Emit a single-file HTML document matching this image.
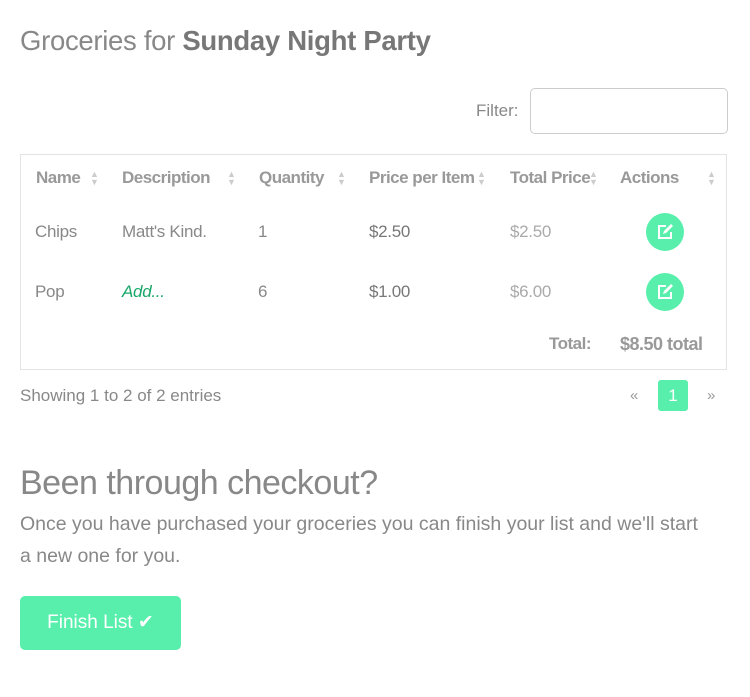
<!DOCTYPE html>
<html><head><style>
body{margin:0;width:750px;height:697px;background:#fff;font-family:"Liberation Sans",sans-serif;color:#888;position:relative;overflow:hidden}
.a{position:absolute;white-space:nowrap}
h1{position:absolute;left:20px;top:25px;margin:0;font-size:27.5px;font-weight:normal;color:#888;letter-spacing:-0.3px}
h1 b{color:#777}
.box{position:absolute;left:20px;top:154px;width:705px;height:214px;border:1px solid #e3e3e3}
.th{font-size:17px;font-weight:bold;color:#999;top:168px;letter-spacing:-0.5px}
.td{font-size:17px;color:#888;letter-spacing:-0.3px}
.s{font-size:9px;color:#ccc;line-height:8px;top:170px}
.ic{position:absolute;width:38px;height:38px;border-radius:50%;background:#58efac}
</style></head><body>
<h1>Groceries for <b>Sunday Night Party</b></h1>
<div class="a" style="left:476px;top:101px;font-size:17px">Filter:</div>
<div class="a" style="left:530px;top:88px;width:196px;height:44px;border:1px solid #ccc;border-radius:5px"></div>
<div class="box"></div>
<div class="a th" style="left:36px">Name</div><div class="a s" style="left:90px">▲<br>▼</div>
<div class="a th" style="left:122px">Description</div><div class="a s" style="left:227px">▲<br>▼</div>
<div class="a th" style="left:259px">Quantity</div><div class="a s" style="left:337px">▲<br>▼</div>
<div class="a th" style="left:369px">Price per Item</div><div class="a s" style="left:477px">▲<br>▼</div>
<div class="a th" style="left:510px">Total Price</div><div class="a s" style="left:589px">▲<br>▼</div>
<div class="a th" style="left:620px">Actions</div><div class="a s" style="left:707px">▲<br>▼</div>
<div class="a td" style="left:35px;top:222px">Chips</div>
<div class="a td" style="left:122px;top:222px">Matt's Kind.</div>
<div class="a td" style="left:258px;top:222px">1</div>
<div class="a td" style="left:369px;top:222px;color:#777">$2.50</div>
<div class="a td" style="left:510px;top:222px;color:#aaa">$2.50</div>
<div class="ic" style="left:646px;top:213px"></div>
<svg class="a" style="left:654px;top:221px" width="22" height="22" viewBox="0 0 22 22"><path d="M12 5H5v12h12v-6" fill="none" stroke="#fff" stroke-width="2"/><path d="M9 13l1-3 7-7 2 2-7 7z" fill="#fff"/></svg>
<div class="a td" style="left:35px;top:282px">Pop</div>
<div class="a td" style="left:122px;top:282px;color:#1aa86a;font-style:italic">Add...</div>
<div class="a td" style="left:258px;top:282px">6</div>
<div class="a td" style="left:369px;top:282px;color:#777">$1.00</div>
<div class="a td" style="left:510px;top:282px;color:#aaa">$6.00</div>
<div class="ic" style="left:646px;top:273px"></div>
<svg class="a" style="left:654px;top:281px" width="22" height="22" viewBox="0 0 22 22"><path d="M12 5H5v12h12v-6" fill="none" stroke="#fff" stroke-width="2"/><path d="M9 13l1-3 7-7 2 2-7 7z" fill="#fff"/></svg>
<div class="a th" style="left:549px;top:334px">Total:</div>
<div class="a th" style="left:620px;top:334px;font-size:18px">$8.50 total</div>
<div class="a" style="left:20px;top:386px;font-size:17px">Showing 1 to 2 of 2 entries</div>
<div class="a" style="left:630px;top:387px;font-size:15px;color:#999">«</div>
<div class="a" style="left:658px;top:380px;width:30px;height:31px;background:#58efac;border-radius:3px;color:#fff;font-size:17px;text-align:center;line-height:31px">1</div>
<div class="a" style="left:707px;top:387px;font-size:15px;color:#999">»</div>
<div class="a" style="left:20px;top:464px;font-size:34px;color:#888;letter-spacing:-0.5px">Been through checkout?</div>
<div class="a" style="left:20px;top:508px;font-size:19.5px;line-height:32px;color:#888">Once you have purchased your groceries you can finish your list and we'll start<br>a new one for you.</div>
<div class="a" style="left:20px;top:596px;width:161px;height:54px;background:#58efac;border-radius:5px;color:#fff;font-size:19px;line-height:54px;text-align:center">Finish List ✔</div>
</body></html>
